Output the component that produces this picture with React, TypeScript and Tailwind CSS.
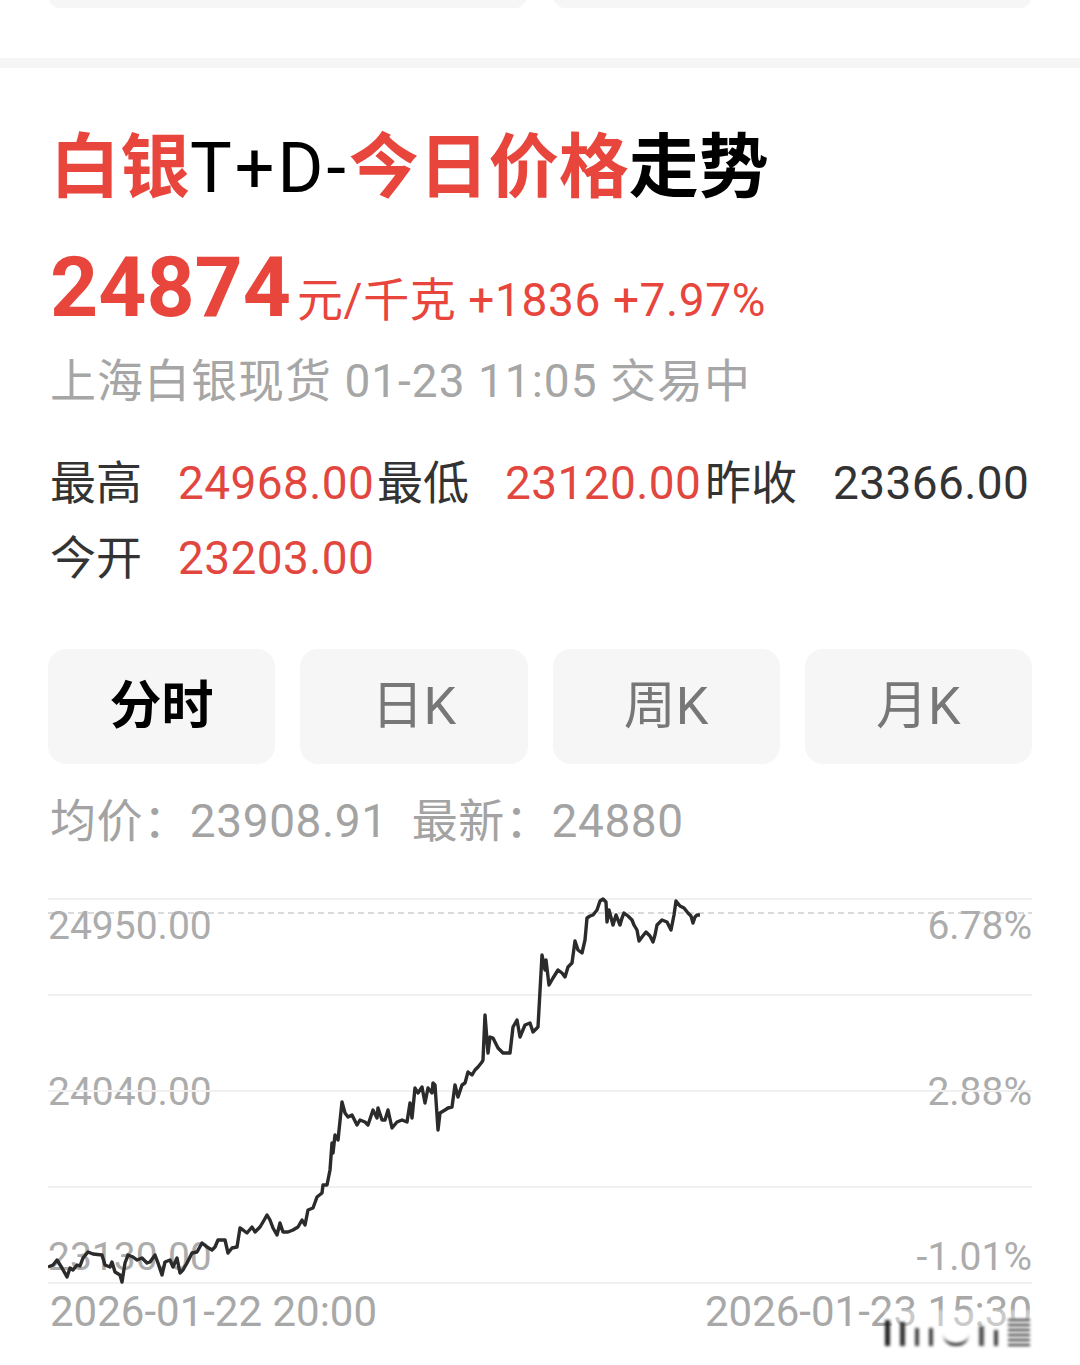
import React from "react";

const RAW = `48,1267 53,1265 57,1260 62,1268 67,1277 70,1268 73,1270 77,1265 80,1266 83,1258 88,1252 93,1254 102,1255 105,1265 110,1267 112,1262 115,1272 120,1275 122,1282 125,1263 128,1255 133,1257 137,1260 142,1258 147,1263 150,1262 155,1255 158,1263 162,1275 165,1262 170,1260 173,1267 177,1258 180,1273 183,1270 187,1263 192,1253 197,1252 202,1243 207,1247 212,1250 215,1247 218,1240 225,1240 228,1253 232,1248 237,1247 240,1228 243,1230 247,1233 252,1227 255,1232 260,1227 263,1222 267,1215 270,1220 273,1228 277,1235 280,1223 283,1232 288,1232 293,1230 298,1227 302,1220 305,1225 308,1210 313,1208 317,1197 322,1193 323,1185 327,1185 330,1170 332,1143 333,1153 335,1135 338,1140 342,1102 345,1113 348,1117 352,1115 357,1125 360,1120 365,1122 368,1125 373,1110 377,1118 378,1108 382,1120 385,1120 388,1110 392,1128 397,1122 402,1120 407,1122 410,1103 412,1118 415,1088 418,1093 422,1087 425,1103 428,1088 432,1093 433,1083 435,1085 438,1130 440,1113 445,1110 448,1108 452,1107 455,1085 458,1097 462,1085 465,1083 468,1072 472,1075 475,1070 478,1067 482,1062 483,1060 485,1015 488,1053 490,1037 493,1038 498,1048 503,1053 510,1053 513,1027 517,1020 520,1037 525,1025 530,1023 533,1032 538,1027 542,955 545,970 546,960 549,985 553,978 558,970 562,973 565,977 568,967 572,963 575,941 578,950 582,953 585,940 587,918 590,916 593,915 597,910 600,901 603,899 606,902 607,922 609,910 613,925 616,915 620,925 622,918 624,913 628,916 632,920 634,925 637,930 639,941 642,937 646,932 650,936 653,942 655,935 657,925 662,920 667,922 671,930 674,915 676,901 680,906 684,908 688,913 691,916 693,923 695,917 697,915 700,915`;

const CHART_X = 48;
const CHART_Y = 890;
const POINTS = RAW.split(" ")
  .map((p) => {
    const [x, y] = p.split(",").map(Number);
    return `${x - CHART_X},${y - CHART_Y}`;
  })
  .join(" ");

const FONT = { fontFamily: 'Roboto, "Noto Sans CJK SC", sans-serif' };

function Tab({ label, active }: { label: string; active?: boolean }) {
  return (
    <div
      className={`flex h-[115px] flex-1 items-center justify-center rounded-[18px] bg-[#f6f6f6] text-[52px] leading-none ${
        active ? "font-bold text-black" : "text-[#777777]"
      }`}
    >
      {label}
    </div>
  );
}

function Stat({ label, value, red = true }: { label: string; value: string; red?: boolean }) {
  return (
    <div className="flex items-center">
      <span className="w-[128px] shrink-0 text-[#333333]">{label}</span>
      <span className={`tracking-[0.4px] ${red ? "text-[#e2473f]" : "text-[#333333]"}`}>{value}</span>
    </div>
  );
}

function AxisRow({ left, right }: { left: string; right: string }) {
  return (
    <div className="flex justify-between text-[39px] leading-[44px] text-[#acacac]">
      <span>{left}</span>
      <span>{right}</span>
    </div>
  );
}

export default function App() {
  return (
    <div className="relative h-[1365px] w-[1080px] overflow-hidden bg-white" style={FONT}>
      {/* top cards */}
      <div className="flex gap-[26px] px-[48px]">
        <div className="-mt-[16px] h-[24px] flex-1 rounded-[16px] bg-[#f6f6f6]" />
        <div className="-mt-[16px] h-[24px] flex-1 rounded-[16px] bg-[#f6f6f6]" />
      </div>
      {/* separator band */}
      <div className="mt-[50px] h-[10px] bg-[#f5f5f5]" />

      <div className="px-[50px]">
        {/* title */}
        <div className="mt-[66px] text-[70px] font-bold leading-[68px]">
          <span className="text-[#e8453c]">白银</span>
          <span className="font-normal tracking-[3px] text-black">T+D-</span>
          <span className="text-[#e8453c]">今日价格</span>
          <span className="text-black">走势</span>
        </div>

        {/* price */}
        <div className="mt-[44px] flex items-baseline text-[#e8453c]">
          <span className="text-[84px] font-bold leading-[84px]">24874</span>
          <span className="ml-[6px] text-[46px] leading-[46px] tracking-[0.6px]">元/千克 +1836 +7.97%</span>
        </div>

        {/* subtitle */}
        <div className="mt-[26px] text-[46px] leading-[50px] tracking-[1px] text-[#a6a6a6]">
          上海白银现货 01-23 11:05 交易中
        </div>

        {/* stats */}
        <div className="mt-[52px] grid grid-cols-[327px_328px_1fr] gap-y-[25px] text-[46px] leading-[50px]">
          <Stat label="最高" value="24968.00" />
          <Stat label="最低" value="23120.00" />
          <Stat label="昨收" value="23366.00" red={false} />
          <Stat label="今开" value="23203.00" />
        </div>
      </div>

      {/* tabs */}
      <div className="mt-[66px] flex gap-[25px] px-[48px]">
        <Tab label="分时" active />
        <Tab label="日K" />
        <Tab label="周K" />
        <Tab label="月K" />
      </div>

      {/* avg */}
      <div className="mt-[32px] px-[50px] text-[46px] leading-[50px] tracking-[0.6px] text-[#a3a3a3]">
        均价：23908.91&nbsp;&nbsp;最新：24880
      </div>

      {/* chart */}
      <div className="relative mx-[48px] mt-[44px] flex h-[400px] flex-col justify-between pb-[11px] pt-[14px]">
        <AxisRow left="24950.00" right="6.78%" />
        <AxisRow left="24040.00" right="2.88%" />
        <AxisRow left="23130.00" right="-1.01%" />
        <svg className="absolute inset-0" width="984" height="400" viewBox="0 0 984 400">
          {[9, 105, 201, 297, 393].map((y) => (
            <line key={y} x1="0" x2="984" y1={y} y2={y} stroke="#f0f0f0" strokeWidth="2" />
          ))}
          <line x1="0" x2="984" y1="23" y2="23" stroke="#b5b5b5" strokeWidth="1.2" strokeDasharray="6 4" />
          <polyline points={POINTS} fill="none" stroke="#2b2b2b" strokeWidth="3.4" strokeLinejoin="round" />
        </svg>
      </div>

      {/* dates */}
      <div className="flex justify-between px-[50px] text-[42px] leading-[44px] text-[#a8a8a8]">
        <span>2026-01-22 20:00</span>
        <span className="mr-[-2px]">2026-01-23 15:30</span>
      </div>

      {/* blurred watermark */}
      <div className="absolute left-[885px] top-[1310px] flex h-[36px] w-[180px] items-end gap-[10px] bg-white/40 blur-[1.5px]">
        <div className="h-[26px] w-[5px] bg-[#222]" />
        <div className="h-[24px] w-[5px] bg-[#333]" />
        <div className="h-[18px] w-[4px] bg-[#444]" />
        <div className="h-[18px] w-[4px] bg-[#444]" />
        <div className="h-[12px] w-[26px] rounded-b-full border-b-[3px] border-[#333]" />
        <div className="h-[20px] w-[5px] bg-[#555]" />
        <div className="h-[16px] w-[4px] bg-[#444]" />
        <div className="h-[28px] w-[22px] bg-[repeating-linear-gradient(0deg,#222_0px,#222_2px,#fff_2px,#fff_5px)]" />
      </div>
    </div>
  );
}
